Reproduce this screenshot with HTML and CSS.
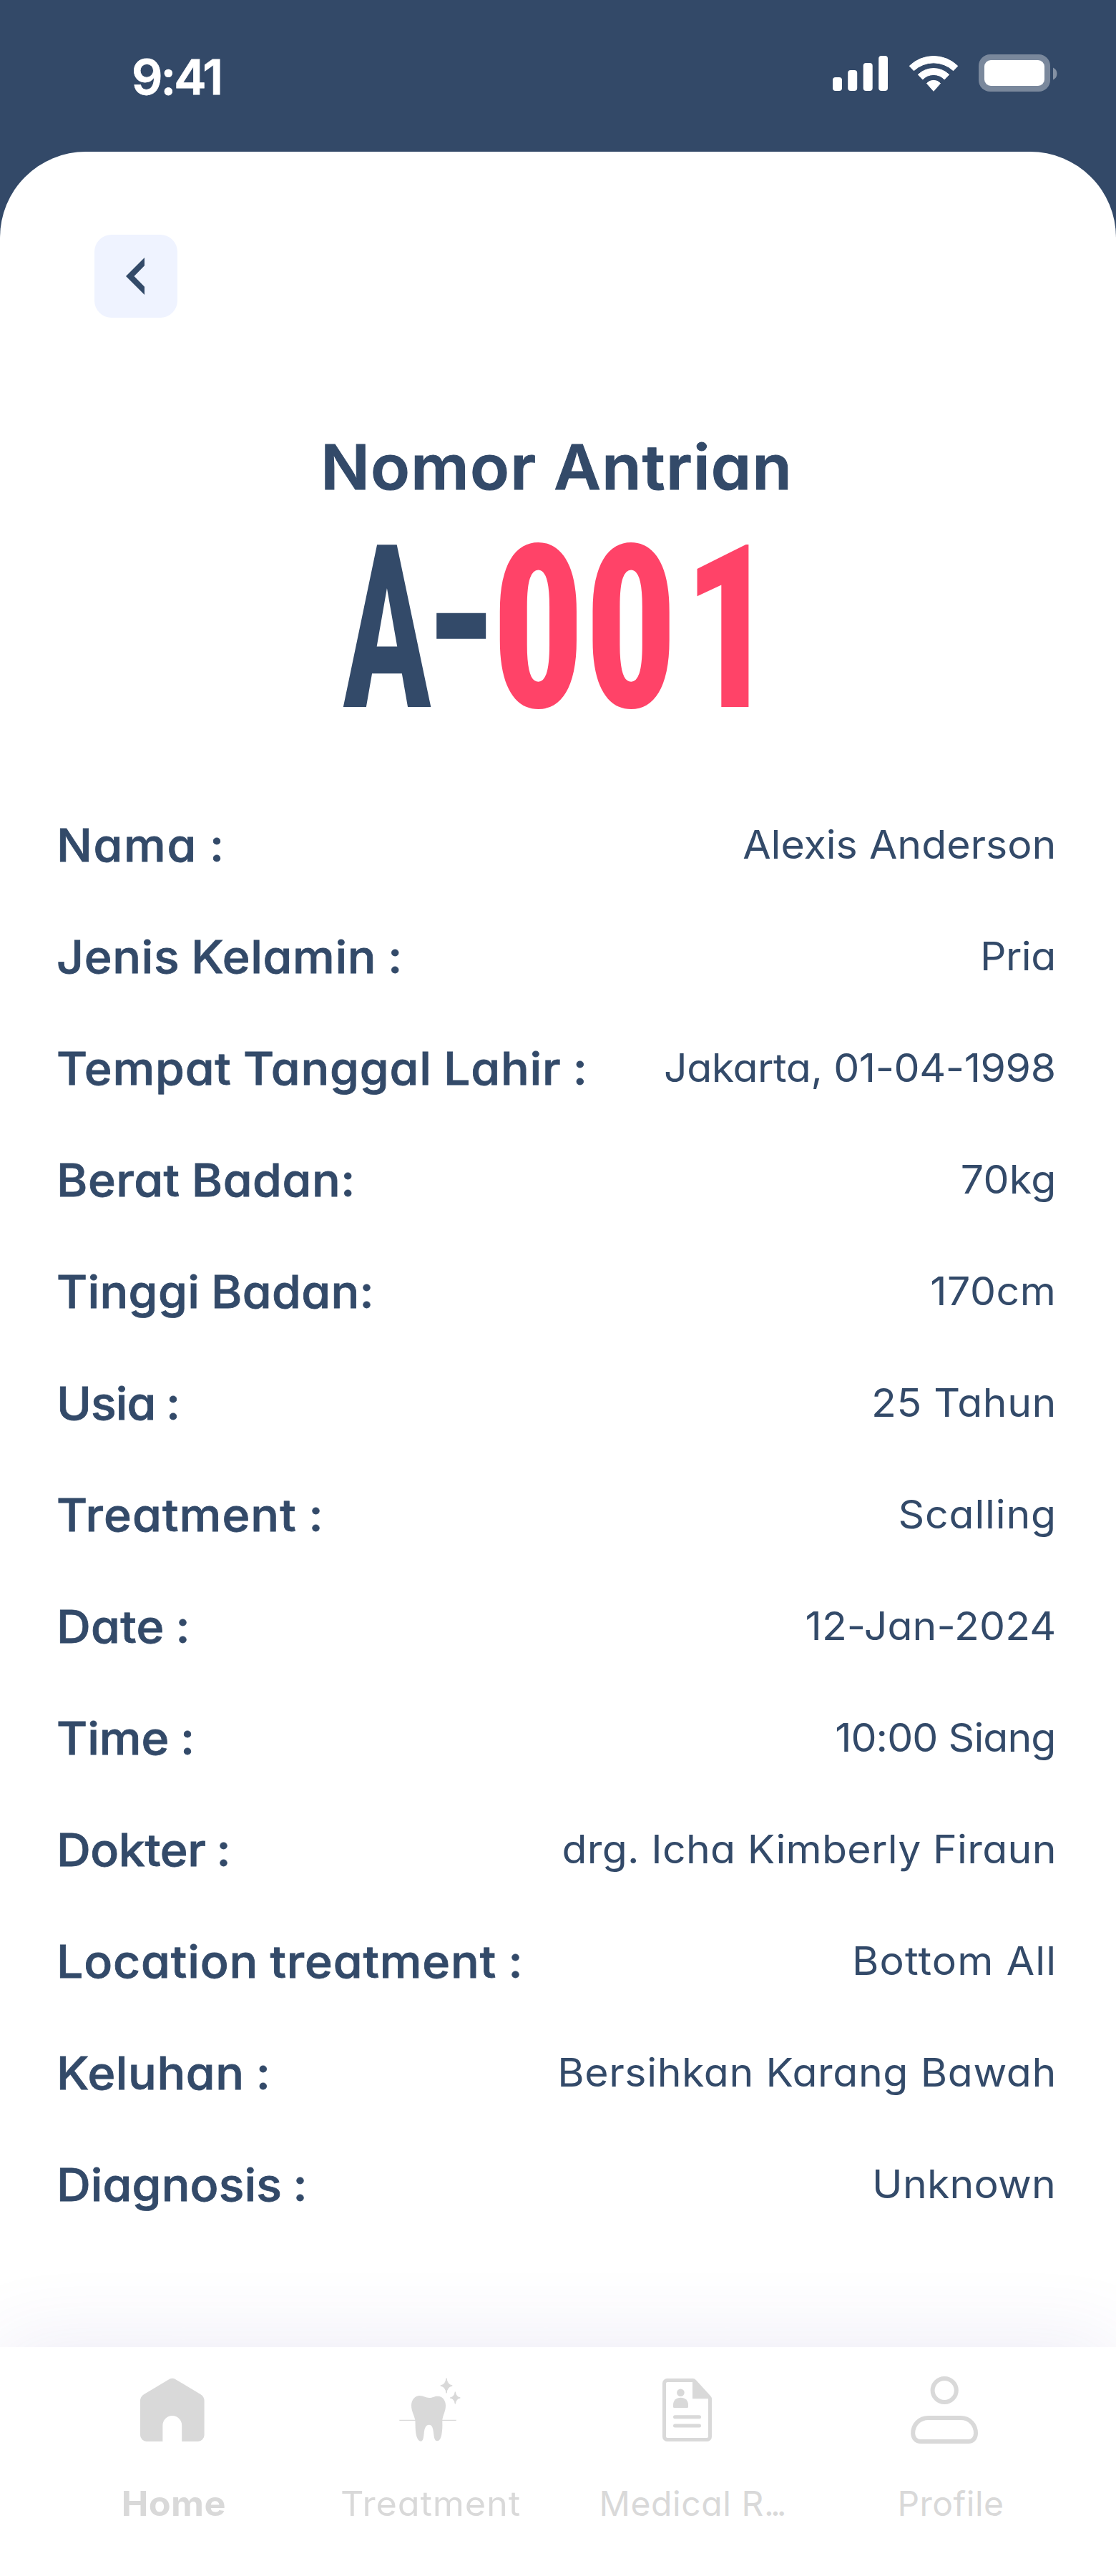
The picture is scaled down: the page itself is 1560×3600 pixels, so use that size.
FILE: index.html
```html
<!DOCTYPE html>
<html lang="id">
<head>
<meta charset="utf-8">
<title>Nomor Antrian</title>
<link rel="stylesheet" href="styles.css">
</head>
<body>
<div class="phone">
  <header class="status">
    <span class="time">9:41</span>
    <svg class="status-icons" viewBox="0 0 314 52" fill="#fff" aria-hidden="true">
      <rect x="0" y="32" width="13" height="19" rx="4"/>
      <rect x="21.2" y="22" width="13" height="29" rx="4"/>
      <rect x="42.7" y="12" width="13" height="39" rx="4"/>
      <rect x="64.2" y="2" width="12.8" height="49" rx="4"/>
      <g stroke="#fff" stroke-width="1" stroke-linejoin="round">
        <path d="M107.2 16.3A48.3 48.3 0 0 1 174.8 16.3L168.6 22.7A40.4 40.4 0 0 0 113.4 22.7Z"/>
        <path d="M119.3 28.3A31.4 31.4 0 0 1 162.7 28.3L156.2 35A20.8 20.8 0 0 0 125.8 35Z"/>
        <path d="M131.5 40.5A13 13 0 0 1 150.5 40.5L141 51.3Z"/>
      </g>
      <rect x="204" y="0" width="100" height="52" rx="16" opacity=".35"/>
      <rect x="212" y="8" width="84" height="36" rx="9"/>
      <path d="M308 18.5C311.500 20 313.500 23 313.500 27S311.500 34 308 35.500Z" opacity=".4"/>
    </svg>
  </header>

  <main class="sheet">
    <button class="back" type="button" aria-label="Kembali">
      <svg viewBox="0 0 116 116" fill="#334a69"><path d="M70 32V43.300L55.500 58L70 72.700V84L44 58Z"/></svg>
    </button>

    <h1 class="title">Nomor Antrian</h1>
    <svg class="queue" viewBox="0 0 620 290">
      <text class="queue-prefix" transform="translate(7.500 269) scale(.666 1)">A</text>
      <text class="queue-prefix" transform="translate(123 253) scale(.91 1)">-</text>
      <text class="queue-number" transform="translate(217.500 269) scale(.8 1)">00<tspan dx="10">1</tspan></text>
    </svg>

    <dl class="details">
      <div class="row"><dt>Nama :</dt><dd>Alexis Anderson</dd></div>
      <div class="row"><dt>Jenis Kelamin :</dt><dd>Pria</dd></div>
      <div class="row"><dt>Tempat Tanggal Lahir :</dt><dd>Jakarta, 01-04-1998</dd></div>
      <div class="row"><dt>Berat Badan:</dt><dd>70kg</dd></div>
      <div class="row"><dt>Tinggi Badan:</dt><dd>170cm</dd></div>
      <div class="row"><dt>Usia :</dt><dd>25 Tahun</dd></div>
      <div class="row"><dt>Treatment :</dt><dd>Scalling</dd></div>
      <div class="row"><dt>Date :</dt><dd>12-Jan-2024</dd></div>
      <div class="row"><dt>Time :</dt><dd>10:00 Siang</dd></div>
      <div class="row"><dt>Dokter :</dt><dd>drg. Icha Kimberly Firaun</dd></div>
      <div class="row"><dt>Location treatment :</dt><dd>Bottom All</dd></div>
      <div class="row"><dt>Keluhan :</dt><dd>Bersihkan Karang Bawah</dd></div>
      <div class="row"><dt>Diagnosis :</dt><dd>Unknown</dd></div>
    </dl>
  </main>

  <nav class="tabs">
    <a class="tab tab-home">
      <svg viewBox="0 0 96 96"><path d="M54.300 5.700Q48.800 1.800 43.300 5.700L9 26.300Q4 29.500 4 35.500V83a9 9 0 0 0 9 9H35.400V69.400a13.400 13.400 0 0 1 26.800 0V92H84.600a9 9 0 0 0 9-9V35.500Q93.600 29.500 88.600 26.300Z"/></svg>
      <span>Home</span>
    </a>
    <a class="tab tab-treatment">
      <svg viewBox="0 0 96 96">
        <path d="M34.700 28C40 28 43 31 48 31S55 28.700 59.700 28.700C67 28.700 71 35 71 41.700C71 50 67 55 66.300 62.300C66.300 67 66.700 72 66 77C65.300 84 64 91.300 59 91.300C55.500 91.300 54.700 86 54 80C53.300 73 52 68.700 47.700 68.700S41.500 73 40.700 80C40 87 39.500 91.700 36.300 91.700C31 91.700 29 82 28.700 73.300C28.500 69 28.700 66 28.300 62.300C27.500 56 23 50 23 41.700C23 34 28 28 34.700 28Z"/>
        <path d="M6.300 62.300H85.700" fill="none" stroke="#d9d9d9" stroke-width="1.300"/>
        <path d="M72 3.700Q73 12.500 80.200 14Q73 15.500 72 24.300Q71 15.500 63.800 14Q71 12.500 72 3.700Z" stroke="#d9d9d9"/>
        <path d="M84.300 22.700Q85.200 29.700 91.300 31Q85.200 32.300 84.300 39.300Q83.400 32.300 77.300 31Q83.400 29.700 84.300 22.700Z" stroke="#d9d9d9"/>
      </svg>
      <span>Treatment</span>
    </a>
    <a class="tab tab-records">
      <svg viewBox="0 0 96 96">
        <path fill-rule="evenodd" d="M20.500 4H56.500Q59.300 4 61 6.200L81.300 28.500Q83 30.300 83 33V85.500A6.500 6.500 0 0 1 76.500 92H20.500A6.500 6.500 0 0 1 14 85.500V10.500A6.500 6.500 0 0 1 20.500 4ZM21 9Q19 9 19 11V85Q19 87 21 87H76Q78 87 78 85V32.300H56V9Z"/>
        <circle cx="39.400" cy="23.700" r="5.300"/>
        <path d="M29 43.500V41C29 34 33.500 30.700 39.500 30.700S50 34 50 41V43.500Q50 45 48.500 45H30.500Q29 45 29 43.500Z"/>
        <path d="M31.500 57.700H65.500M31.500 70H65.500" fill="none" stroke="#d9d9d9" stroke-width="5" stroke-linecap="round"/>
      </svg>
      <span>Medical R<span class="dots">...</span></span>
    </a>
    <a class="tab tab-profile">
      <svg viewBox="0 0 96 96">
        <g fill="none" stroke="#d9d9d9" stroke-width="6">
          <circle cx="48.200" cy="20.500" r="16.600"/>
          <path d="M26 59H70.500C84 59 92 69 92 80.500C92 87 88 92 81.500 92H15C8.500 92 4.200 87 4.200 80.500C4.200 69 12.500 59 26 59Z"/>
        </g>
      </svg>
      <span>Profile</span>
    </a>
  </nav>
</div>
</body>
</html>
```
FILE: styles.css
```css
* { box-sizing: border-box; }

body {
  margin: 0;
  background: #334968;
  color: #334a69;
  font-family: Inter, "Open Sans", sans-serif;
  font-feature-settings: "cv11";
}

.phone {
  display: flex;
  flex-direction: column;
  width: 1560px;
  height: 3600px;
  overflow: hidden;
}

/* Status bar */
.status {
  display: flex;
  justify-content: space-between;
  align-items: flex-start;
  height: 212px;
  padding: 67px 82px 0 184px;
  color: #fff;
}
.time {
  font-size: 68px;
  font-weight: 600;
  line-height: 80px;
  letter-spacing: -3px;
  -webkit-text-stroke: .8px #fff;
}
.status-icons { width: 314px; height: 52px; margin-top: 9px; }

/* Content sheet */
.sheet {
  display: flex;
  flex-direction: column;
  flex: 1;
  padding-top: 116px;
  border-radius: 120px 120px 0 0;
  background: #fff;
}
.back {
  width: 116px;
  height: 116px;
  margin-left: 132px;
  padding: 0;
  border: 0;
  border-radius: 24px;
  background: #eff3ff;
}
.back svg { display: block; width: 116px; height: 116px; }

.title {
  align-self: center;
  margin: 143px 4px 0 0;
  font-size: 86px;
  font-weight: 600;
  line-height: 132px;
  letter-spacing: 1.2px;
  transform: scaleX(1.05);
  -webkit-text-stroke: 1px #334a69;
}
.queue {
  align-self: center;
  width: 620px;
  height: 290px;
  overflow: visible;
  font: 700 319px "Roboto Condensed", Roboto, sans-serif;
}
.queue-prefix { fill: #334a69; }
.queue-number { fill: #ff4368; font-weight: 800; }

/* Patient details */
.details {
  display: flex;
  flex-direction: column;
  gap: 60px;
  margin: 124px 0 0;
  padding: 0 84px 0 79px;
}
.row {
  display: flex;
  justify-content: space-between;
  align-items: flex-start;
  height: 96px;
  white-space: nowrap;
}
.row dt {
  font-size: 63px;
  font-weight: 500;
  line-height: 96px;
  letter-spacing: var(--label);
  word-spacing: -2px;
  transform: scaleX(1.05);
  transform-origin: left;
  -webkit-text-stroke: .8px #334a69;
}
.row dd {
  margin: 5px calc(var(--value) * -1) 0 0;
  font-size: 55px;
  line-height: 84px;
  letter-spacing: var(--value);
  transform: scaleX(1.04);
  transform-origin: right;
}
.row:nth-child(1) { --label: 1.5px; --value: 0px; }
.row:nth-child(2) { --label: .6px; --value: -.5px; }
.row:nth-child(3) { --label: .75px; --value: -.4px; }
.row:nth-child(4) { --label: .5px; --value: .2px; }
.row:nth-child(5) { --label: .3px; --value: .5px; }
.row:nth-child(6) { --label: -.9px; --value: .5px; }
.row:nth-child(7) { --label: 1.05px; --value: .8px; }
.row:nth-child(8) { --label: .3px; --value: .1px; }
.row:nth-child(9) { --label: 0px; --value: -.9px; }
.row:nth-child(10) { --label: -.4px; --value: .3px; }
.row:nth-child(11) { --label: .8px; --value: 1.1px; }
.row:nth-child(12) { --label: .55px; --value: .6px; }
.row:nth-child(13) { --label: .1px; --value: .2px; }

/* Bottom tabs */
.tabs {
  display: grid;
  grid-template-columns: repeat(4, 360px);
  height: 320px;
  padding: 40px 60px 0;
  background: #fff;
  box-shadow: 0 0 120px rgba(72, 58, 160, .11);
}
.tab {
  display: flex;
  flex-direction: column;
  align-items: center;
  gap: 47px;
  color: #d9d9d9;
  font-size: 48px;
  line-height: 72px;
}
.tab svg { width: 96px; height: 96px; fill: #d9d9d9; }
.tab-home span { padding-left: 6px; font-weight: 700; letter-spacing: .4px; transform: scaleX(1.05); }
.tab-treatment span { padding-left: 4px; letter-spacing: .8px; transform: scaleX(1.05); }
.tab-records > span { padding-left: 12px; letter-spacing: .6px; }
.tab-records .dots { letter-spacing: -5px; }
.tab-profile span { padding-left: 18px; letter-spacing: .5px; }
```
